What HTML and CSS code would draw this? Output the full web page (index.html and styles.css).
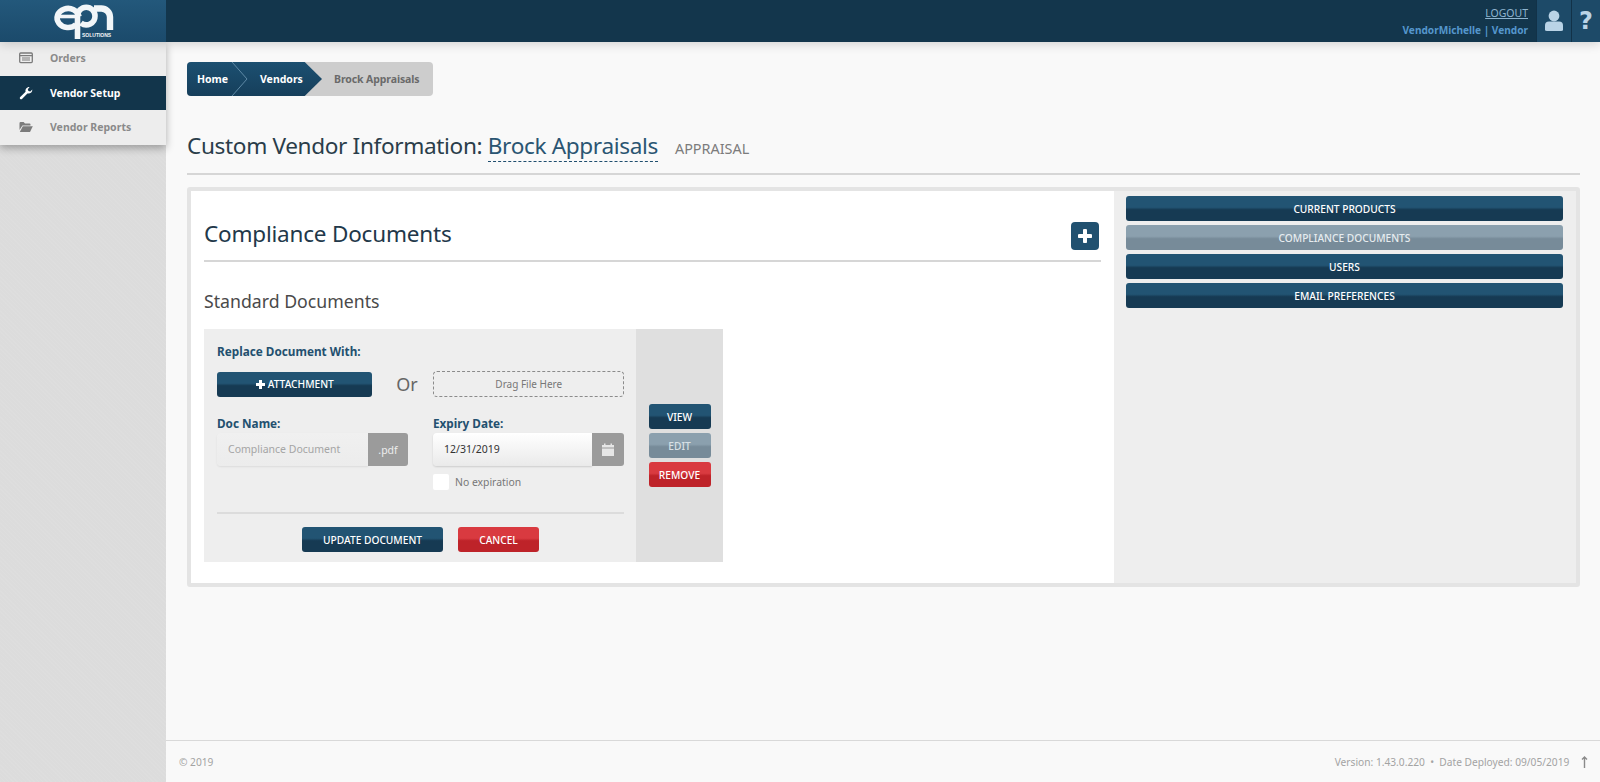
FILE: index.html
```html
<!DOCTYPE html>
<html lang="en">
<head>
<meta charset="utf-8">
<title>Custom Vendor Information</title>
<link rel="stylesheet" href="styles.css">
</head>
<body>
<header class="topbar">
  <div class="brand">
    <svg class="logo" width="66" height="42" viewBox="0 0 66 42" fill="none" stroke="#f2f6f8" aria-label="epn logo">
      <path d="M6 16.5 H28" stroke-width="3.6"/>
      <path d="M28 16.5 A 11 9.5 0 1 0 25 24.6" stroke-width="5.6"/>
      <path d="M26.5 39 V16 A 8.7 8.7 0 0 1 44 16 A 8.7 8.7 0 0 1 30 23" stroke-width="5.6"/>
      <path d="M43 8.5 H50 A 8.7 8.7 0 0 1 59 17 V30" stroke-width="6.4"/>
      <text x="31" y="36.5" class="logo-sub">SOLUTIONS</text>
    </svg>
  </div>
  <div class="top-fill">
    <div class="user">
      <a class="logout" href="#">LOGOUT</a>
      <div class="who">VendorMichelle | Vendor</div>
    </div>
    <div class="top-icon icon-user">
      <svg width="20" height="22" viewBox="0 0 20 22"><circle cx="10" cy="6" r="5.4" fill="#b9d3e6"/><path d="M1 20 V15.5 Q1 11.5 5 11.5 H15 Q19 11.5 19 15.5 V20 Q19 21 17 21 H3 Q1 21 1 20Z" fill="#b9d3e6"/></svg>
    </div>
    <div class="top-icon icon-help">
      <span class="qmark">?</span>
    </div>
  </div>
</header>
<div class="layout">
  <aside class="sidebar">
    <nav class="nav">
      <a class="nav-item" href="#">
        <svg class="nav-ico" width="14" height="12" viewBox="0 0 14 12"><rect x=".7" y="1" width="12.6" height="9.6" rx="1" fill="none" stroke="#7b7b7b" stroke-width="1.3"/><path d="M.7 3.6H13.3M3 6H11M3 8H11" stroke="#7b7b7b" stroke-width="1.2"/></svg>
        <span>Orders</span>
      </a>
      <a class="nav-item active" href="#">
        <svg class="nav-ico" width="14" height="14" viewBox="0 0 14 14"><path d="M1 11.2 6.6 5.8C6 3.3 7.8.8 10.6 1L8.8 3.2 9.4 5 11.3 5.4 13.3 3.4C13.5 6.2 11 8 8.4 7.4L3 13C1.8 13.9.2 12.4 1 11.2Z" fill="#fff"/></svg>
        <span>Vendor Setup</span>
      </a>
      <a class="nav-item" href="#">
        <svg class="nav-ico" width="14" height="12" viewBox="0 0 14 12"><path d="M.5 2.2Q.5 1 1.6 1H4.6L6 2.4H10.6Q11.5 2.4 11.5 3.4V4.4H3.4L.5 9Z" fill="#7b7b7b"/><path d="M3.8 5.2H13.8L11 11H.8Z" fill="#7b7b7b"/></svg>
        <span>Vendor Reports</span>
      </a>
    </nav>
  </aside>
  <div class="content">
    <main class="main">
      <div class="crumbs">
        <a class="crumb crumb-home" href="#">Home</a>
        <a class="crumb crumb-vendors" href="#">Vendors</a>
        <span class="crumb crumb-current">Brock Appraisals</span>
        <svg class="crumb-chevron" width="18" height="34" viewBox="0 0 18 34" fill="none"><path d="M1 0 16 17 1 34" stroke="#5f8aa6" stroke-width="1"/></svg>
      </div>
      <div class="title-row">
        <h1 class="page-title">Custom Vendor Information: <span class="vendor-name">Brock Appraisals</span></h1>
        <span class="vendor-type">APPRAISAL</span>
      </div>
      <section class="card">
        <div class="card-main">
          <div class="section-head">
            <h2 class="section-title">Compliance Documents</h2>
            <button class="add-btn" aria-label="Add"><svg width="14" height="14" viewBox="0 0 14 14"><path d="M7 1.5V12.5M1.5 7H12.5" stroke="#fff" stroke-width="4" stroke-linecap="round"/></svg></button>
          </div>
          <h3 class="sub-title">Standard Documents</h3>
          <div class="doc">
            <div class="doc-form">
              <div class="label replace-label">Replace Document With:</div>
              <div class="row upload-row">
                <button class="btn btn-navy attach"><svg width="11" height="11" viewBox="0 0 11 11"><path d="M5.5 1V10M1 5.5H10" stroke="#fff" stroke-width="3"/></svg>ATTACHMENT</button>
                <span class="or">Or</span>
                <div class="drop">Drag File Here</div>
              </div>
              <div class="row fields">
                <div class="field-name">
                  <div class="label">Doc Name:</div>
                  <div class="input-group">
                    <div class="input disabled">Compliance Document</div>
                    <div class="addon addon-pdf">.pdf</div>
                  </div>
                </div>
                <div class="field-date">
                  <div class="label">Expiry Date:</div>
                  <div class="input-group">
                    <div class="input date">12/31/2019</div>
                    <div class="addon addon-cal"><svg width="12" height="13" viewBox="0 0 12 13"><path d="M2 .5H3.5V2H8.5V.5H10V2H12V4.5H0V2H2Z M0 5.5H12V13H0Z" fill="#e6e6e6"/></svg></div>
                  </div>
                  <label class="check"><span class="box"></span>No expiration</label>
                </div>
              </div>
              <div class="form-actions">
                <button class="btn btn-navy update">UPDATE DOCUMENT</button>
                <button class="btn btn-red cancel">CANCEL</button>
              </div>
            </div>
            <div class="doc-actions">
              <button class="btn btn-navy small">VIEW</button>
              <button class="btn btn-grey small">EDIT</button>
              <button class="btn btn-red small">REMOVE</button>
            </div>
          </div>
        </div>
        <div class="card-side">
          <button class="btn btn-tab">CURRENT PRODUCTS</button>
          <button class="btn btn-tab is-current">COMPLIANCE DOCUMENTS</button>
          <button class="btn btn-tab">USERS</button>
          <button class="btn btn-tab">EMAIL PREFERENCES</button>
        </div>
      </section>
    </main>
    <footer class="footer">
      <span>© 2019</span>
      <span class="meta">Version: 1.43.0.220 &nbsp;•&nbsp; Date Deployed: 09/05/2019 <svg class="up" width="7" height="12" viewBox="0 0 7 12"><path d="M3.5 12V1.5M1 3.5 3.5 1 6 3.5" fill="none" stroke="#8a8a8a" stroke-width="1.4"/></svg></span>
    </footer>
  </div>
</div>
</body>
</html>
```
FILE: styles.css
```css
* { box-sizing: border-box; }
html, body { margin: 0; height: 100%; }
body {
  font-family: "Noto Sans", "Open Sans", sans-serif;
  color: #1f3a4d;
  background: #f9f9f9;
  display: flex;
  flex-direction: column;
  overflow: hidden;
}
button { font-family: inherit; border: 0; padding: 0; cursor: pointer; }
a { text-decoration: none; }

.topbar { height: 42px; display: flex; flex: none; position: relative; z-index: 3; box-shadow: 0 2px 10px rgba(0,0,0,.16); }
.brand { width: 166px; background: linear-gradient(#23587b, #1b4a6b); display: flex; justify-content: flex-start; align-items: flex-start; padding-left: 51px; }
.logo { display: block; }
.logo-sub { font-family: "Liberation Sans", sans-serif; font-size: 5px; fill: #f2f6f8; stroke: none; font-weight: 700; }
.top-fill { flex: 1; background: #13364c; display: flex; justify-content: flex-end; }
.user { text-align: right; padding: 5px 8px 0 0; line-height: 16px; }
.logout { color: #8fb4cf; text-decoration: underline; font-size: 10.5px; display: block; }
.who { color: #5596cc; font-weight: 700; font-size: 10.1px; margin-top: 1px; }
.top-icon { background: #1d4a68; border-left: 1px solid #123248; display: flex; align-items: center; justify-content: center; }
.icon-user { width: 35px; }
.icon-help { width: 29px; }
.qmark { font-family: "DejaVu Sans", sans-serif; font-weight: 700; font-size: 24px; color: #b9d3e6; line-height: 1; }

.layout { flex: 1; display: flex; min-height: 0; }
.sidebar { width: 166px; flex: none; background: #dcdcdc; background-image: repeating-linear-gradient(45deg, rgba(255,255,255,.05) 0 1px, transparent 1px 3px); }
.nav { background: #ededed; box-shadow: 0 3px 8px rgba(0,0,0,.3); }
.nav-item { height: 34.5px; display: flex; align-items: center; padding-left: 19px; gap: 17px; font-size: 10.5px; font-weight: 700; color: #8a8a8a; }
.nav-item:first-child { height: 34px; padding-bottom: 3px; }
.nav-ico { flex: none; }
.active { background: #12354b; color: #fff; height: 34px; padding-bottom: 1px; }

.content { flex: 1; display: flex; flex-direction: column; min-width: 0; }
.main { flex: 1; padding: 20px 20px 0 21px; }

.crumbs { position: relative; display: flex; width: 246px; height: 34px; background: #cdcdcd; border-radius: 4px; overflow: hidden; font-size: 10.5px; font-weight: 700; }
.crumb { display: flex; align-items: center; height: 100%; }
.crumb-home { width: 44px; flex: none; padding-left: 10px; color: #fff; background: linear-gradient(#1c5071, #163f5b); white-space: nowrap; }
.crumb-vendors { width: 91px; flex: none; padding-left: 29px; color: #fff; background: linear-gradient(#1c5071, #163f5b); clip-path: polygon(0 0, 81% 0, 100% 50%, 81% 100%, 0 100%); }
.crumb-current { padding-left: 12px; color: #6a6a6a; white-space: nowrap; letter-spacing: -.1px; }
.crumb-chevron { position: absolute; left: 44px; top: 0; }

.title-row { display: flex; align-items: baseline; gap: 17px; padding: 37px 0 14px; border-bottom: 2px solid #d6d6d6; }
.page-title { margin: 0; font-size: 22.6px; font-weight: 400; line-height: 26px; color: #2a3d4a; letter-spacing: -.35px; white-space: nowrap; }
.vendor-name { color: #2a5572; border-bottom: 1px dashed #1f4e6e; }
.vendor-type { font-size: 14.4px; color: #7c7c7c; }

.card { display: flex; margin-top: 12px; height: 400px; border: 4px solid #e4e4e4; border-radius: 3px; background: #fff; }
.card-main { width: 923px; flex: none; padding: 0 13px; }
.section-head { height: 71px; display: flex; align-items: center; justify-content: space-between; border-bottom: 2px solid #d6d6d6; padding: 15px 2px 0 0; }
.section-title { margin: 0; font-size: 22.5px; font-weight: 400; color: #22384a; letter-spacing: -.2px; }
.add-btn { width: 28px; height: 28px; background: #215170; border-radius: 4px; display: flex; align-items: center; justify-content: center; margin-top: 6px; }
.sub-title { margin: 27px 0 16px; font-size: 17.7px; line-height: 24px; font-weight: 400; color: #4a4a4a; }

.doc { display: flex; width: 519px; height: 233px; background: #eeeeee; }
.doc-form { width: 432px; padding: 14px 12px 0 13px; }
.label { font-size: 11.75px; font-weight: 700; color: #23506f; line-height: 16px; }
.row { display: flex; }
.upload-row { margin-top: 12px; align-items: center; height: 26px; }
.attach { width: 155px; }
.attach svg { margin-right: 2px; }
.or { width: 62px; text-align: center; padding-left: 9px; font-size: 18px; color: #666; }
.drop { width: 191px; height: 26px; border: 1px dashed #8b8b8b; border-radius: 4px; text-align: center; font-size: 10px; line-height: 25px; color: #777; }
.fields { margin-top: 18px; height: 87px; gap: 25px; }
.field-name { width: 191px; }
.field-date { width: 191px; }
.input-group { display: flex; height: 33px; margin-top: 2px; }
.input { flex: 1; font-size: 10.5px; line-height: 33px; padding-left: 11px; border-radius: 4px 0 0 4px; }
.disabled { color: #a5a5a5; background: linear-gradient(#f0f0f0, #ececec); box-shadow: 0 1px 2px rgba(0,0,0,.08); }
.date { color: #333; background: linear-gradient(#fff, #eaeaea); box-shadow: 0 1px 2px rgba(0,0,0,.14); }
.addon { background: #9b9b9b; color: #eee; display: flex; align-items: center; justify-content: center; border-radius: 0 3px 3px 0; font-size: 10.5px; }
.addon-pdf { width: 40px; }
.addon-cal { width: 32px; }
.check { display: flex; align-items: center; gap: 6px; margin-top: 8px; font-size: 10.4px; color: #777; }
.box { width: 16px; height: 16px; background: #fff; border-radius: 2px; }
.form-actions { margin-top: 10px; border-top: 2px solid #dcdcdc; display: flex; justify-content: center; gap: 15px; padding-top: 13px; }

.btn { height: 25px; border-radius: 3px; font-size: 10.2px; font-weight: 500; color: #fff; display: flex; align-items: center; justify-content: center; }
.btn-navy, .btn-tab { background: linear-gradient(#225473 0 45%, #163a53 55% 100%); }
.btn-red { background: linear-gradient(#d93a40 0 45%, #be2329 55% 100%); }
.btn-grey { background: linear-gradient(#8ba0ae 0 45%, #778b99 55% 100%); color: #d8e0e5; }
.update { width: 141px; }
.cancel { width: 81px; }

.doc-actions { flex: 1; background: #dfdfdf; padding-top: 75px; display: flex; flex-direction: column; align-items: center; gap: 4px; }
.small { width: 62px; }

.card-side { flex: 1; background: #eeeeee; padding: 5px 13px 0 12px; display: flex; flex-direction: column; gap: 4px; }
.btn-tab { width: 100%; flex: none; }
.is-current { background: linear-gradient(#8ba0ae 0 45%, #778b99 55% 100%); color: #e6ecef; }

.footer { height: 42px; flex: none; border-top: 1px solid #d9d9d9; display: flex; align-items: center; justify-content: space-between; padding: 0 12px 0 13px; font-size: 10.2px; color: #a3a3a3; }
.meta { display: flex; align-items: center; gap: 3px; white-space: pre; }
.up { margin-left: 6px; }
```
